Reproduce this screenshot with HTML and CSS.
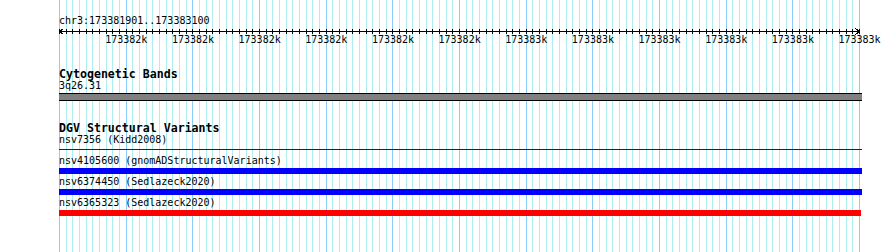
FILE: index.html
```html
<!DOCTYPE html>
<html lang="en">
<head>
    <meta charset="UTF-8">
    <title>chr3:173381901..173383100</title>
    <link rel="stylesheet" href="styles.css">
</head>
<body>
    <div class="panel">
        <svg class="grid" id="grid" width="803" height="252"></svg>

        <div class="tracks">
            <div class="ruler-name">chr3:173381901..173383100</div>
            <svg class="ruler" id="ruler" width="803" height="8"></svg>
            <div class="ruler-labels">
                <span>173382k</span>
                <span>173382k</span>
                <span>173382k</span>
                <span>173382k</span>
                <span>173382k</span>
                <span>173382k</span>
                <span>173383k</span>
                <span>173383k</span>
                <span>173383k</span>
                <span>173383k</span>
                <span>173383k</span>
                <span>173383k</span>
            </div>

            <div class="track">
                <div class="track-title">Cytogenetic Bands</div>
                <div class="feature-label">3q26.31</div>
                <div class="band"></div>
            </div>

            <div class="track">
                <div class="track-title">DGV Structural Variants</div>
                <div class="feature-label">nsv7356 (Kidd2008)</div>
                <div class="thin-line"></div>

                <div class="features">
                    <div class="feature">
                        <div class="feature-label">nsv4105600 (gnomADStructuralVariants)</div>
                        <div class="bar blue"></div>
                    </div>
                    <div class="feature">
                        <div class="feature-label">nsv6374450 (Sedlazeck2020)</div>
                        <div class="bar blue"></div>
                    </div>
                    <div class="feature">
                        <div class="feature-label">nsv6365323 (Sedlazeck2020)</div>
                        <div class="bar red"></div>
                    </div>
                </div>
            </div>
        </div>
    </div>

    <script>
        const svgNS = 'http://www.w3.org/2000/svg';
        const grid = document.getElementById('grid');
        const ruler = document.getElementById('ruler');

        function addLine(parent, x1, y1, x2, y2, cls) {
            const l = document.createElementNS(svgNS, 'line');
            l.setAttribute('x1', x1);
            l.setAttribute('y1', y1);
            l.setAttribute('x2', x2);
            l.setAttribute('y2', y2);
            l.setAttribute('class', cls);
            parent.appendChild(l);
        }

        // Grid lines + ruler ticks (120 steps over 800px)
        for (let i = 0; i <= 120; i++) {
            const x = Math.floor(i * 800 / 120 + 0.5) + 0.5;
            addLine(grid, x, 0, x, 252, i % 10 === 0 ? 'major' : 'minor');
            addLine(ruler, x, 2, x, 7, 'tick');
        }

        // Ruler line and arrows
        addLine(ruler, 0.5, 4.5, 801, 4.5, 'tick');
        addLine(ruler, 0.5, 4.5, 4.5, 1.5, 'tick');
        addLine(ruler, 0.5, 4.5, 4.5, 7.5, 'tick');
        addLine(ruler, 800.5, 4.5, 796.5, 1.5, 'tick');
        addLine(ruler, 800.5, 4.5, 796.5, 7.5, 'tick');
    </script>
</body>
</html>
```

FILE: styles.css
```css
html, body {
    margin: 0;
    height: 252px;
    overflow: hidden;
    background: #FFFFFF;
}
body {
    font-family: "DejaVu Sans Mono", monospace;
    font-size: 10px;
    color: #000000;
}
.panel {
    position: relative;
    margin-left: 59px;
    width: 803px;
    height: 252px;
}
.grid {
    position: absolute;
    top: 0;
    left: 0;
    shape-rendering: crispEdges;
}
.grid .minor {
    stroke: #AFEEEE;
    stroke-width: 1;
}
.grid .major {
    stroke: #87CEFA;
    stroke-width: 1;
}
.tracks {
    position: relative;
    padding-top: 15px;
}
.ruler-name {
    line-height: 12px;
    white-space: nowrap;
}
.ruler {
    display: block;
    shape-rendering: crispEdges;
}
.ruler .tick {
    stroke: #000000;
    stroke-width: 1;
}
.ruler-labels {
    display: flex;
    margin-left: 34px;
    padding-bottom: 2px;
    line-height: 10px;
    white-space: nowrap;
}
.ruler-labels span {
    flex: none;
    width: 66.667px;
    text-align: center;
}
.track {
    margin-top: 21px;
}
.track-title {
    font-weight: bold;
    font-size: 11.6px;
    line-height: 12px;
    white-space: nowrap;
}
.feature-label {
    line-height: 12px;
    white-space: nowrap;
}
.band {
    box-sizing: border-box;
    margin-top: 1px;
    width: 803px;
    height: 8px;
    background: #808080;
    border-top: 1px solid #000000;
    border-bottom: 1px solid #000000;
}
.thin-line {
    margin-top: 3px;
    width: 803px;
    height: 1px;
    background: #4B0070;
}
.features {
    padding-top: 5px;
}
.feature + .feature {
    margin-top: 2px;
}
.bar {
    margin-top: 1px;
    height: 6px;
}
.bar.blue {
    width: 803px;
    background: #0000FF;
}
.bar.red {
    width: 802px;
    background: #FF0000;
}
```
